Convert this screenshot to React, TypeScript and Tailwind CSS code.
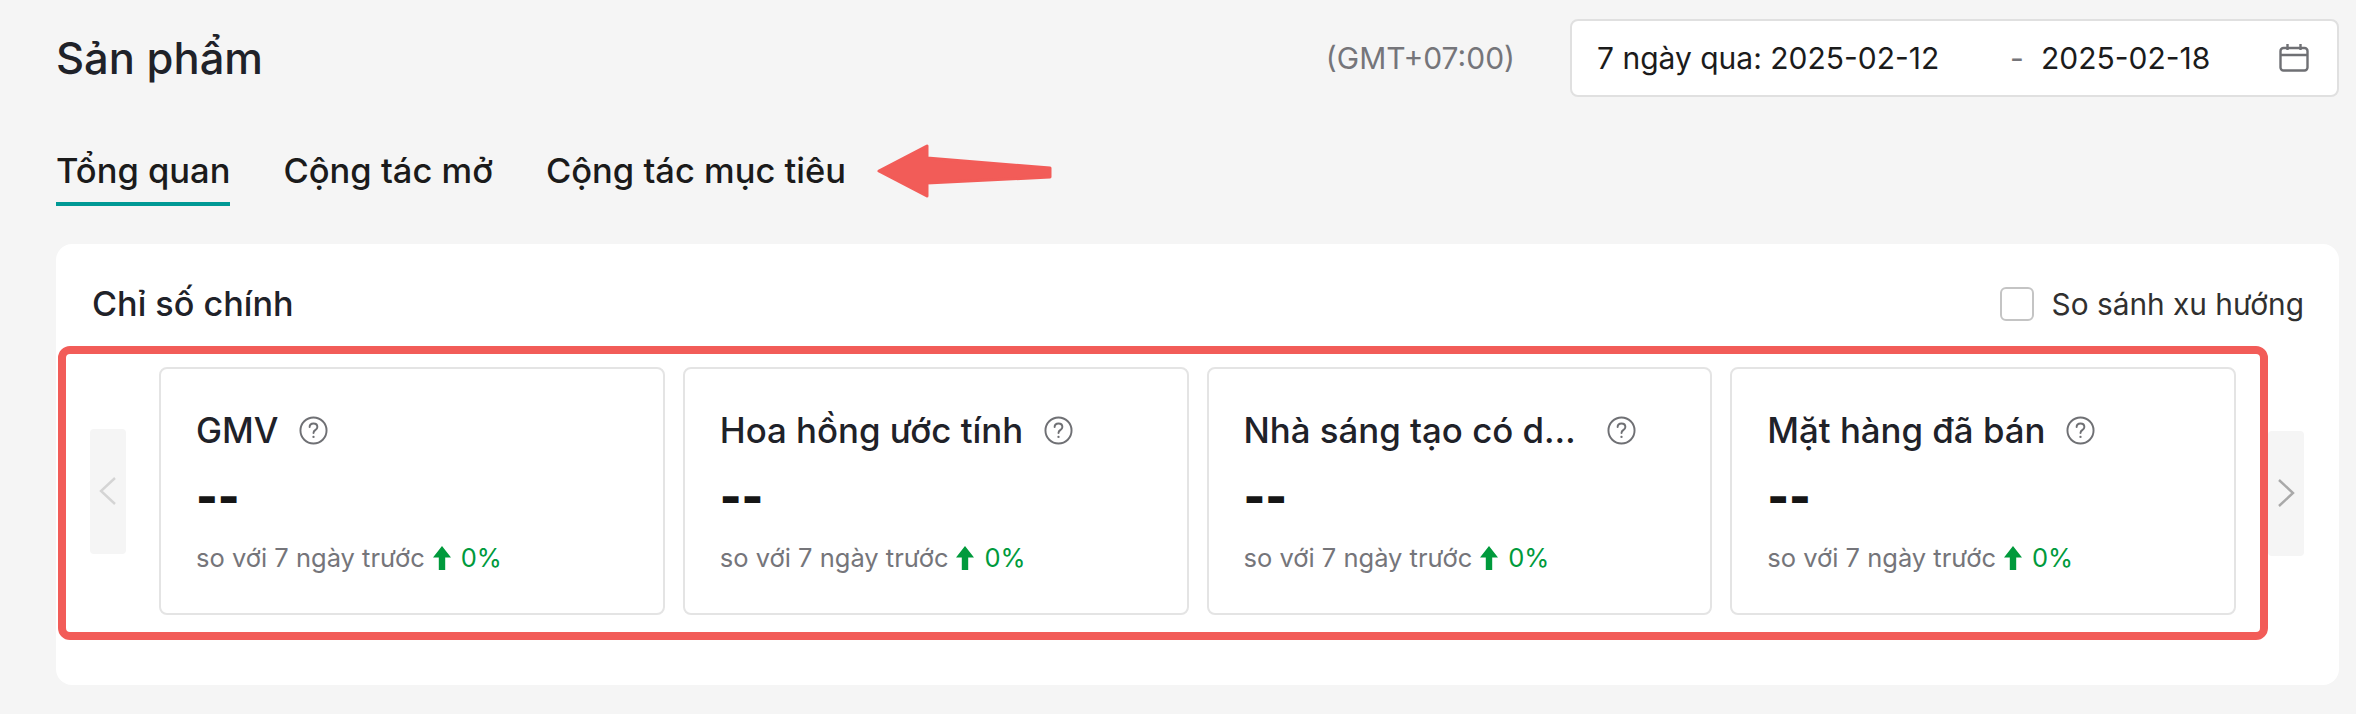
const font = 'font-["Inter","Noto_Sans",sans-serif]';

const metrics = ['GMV', 'Hoa hồng ước tính', 'Nhà sáng tạo có doanh số', 'Mặt hàng đã bán'];

function HelpIcon() {
  return (
    <svg viewBox="0 0 30 30" className="w-[29px] h-[29px] shrink-0" fill="none" stroke="#6f7074" strokeWidth="2">
      <circle cx="15" cy="15" r="13.5" />
      <path d="M11 11.5c0-2.4 1.8-3.8 4-3.8s4 1.4 4 3.6c0 1.6-.9 2.4-2.2 3.3-1.2.8-1.8 1.4-1.8 2.9" strokeLinecap="round" />
      <circle cx="15" cy="21.6" r="1.2" fill="#6f7074" stroke="none" />
    </svg>
  );
}

function UpArrow() {
  return (
    <svg viewBox="0 0 18 24" className="w-[18px] h-[24px] shrink-0" fill="#009a3c">
      <path d="M9 0 18 11.5H12.2V24H5.8V11.5H0Z" />
    </svg>
  );
}

function MetricCard({ title }: { title: string }) {
  return (
    <div className="h-[248px] border-2 border-[#e4e4e4] rounded-[8px] bg-white pl-[35px] pr-[20px] pt-[39px]">
      <div className="flex items-center gap-[21px] h-[44px]">
        <div className="max-w-[342px] truncate text-[34.8px] leading-[44px] font-medium text-[#1f2229]">{title}</div>
        <HelpIcon />
      </div>
      <div className="mt-[12px] h-[64px] text-[46px] leading-[64px] font-black text-[#151515]">--</div>
      <div className="mt-[12px] flex items-center h-[36px] text-[25.5px] leading-[36px] text-[#75757a]">
        <span>so với 7 ngày trước</span>
        <span className="ml-[8px]"><UpArrow /></span>
        <span className="ml-[10px] text-[#009a3c]">0%</span>
      </div>
    </div>
  );
}

function Chevron({ right }: { right?: boolean }) {
  return (
    <div className="w-[36px] h-[125px] rounded-[4px] bg-[#f5f5f5] flex items-center justify-center">
      <svg viewBox="0 0 18 30" className="w-[18px] h-[30px]" fill="none" stroke={right ? '#a9a9a9' : '#d4d4d4'} strokeWidth="2.4">
        <path d={right ? 'M2 2 16 15 2 28' : 'M16 2 2 15 16 28'} />
      </svg>
    </div>
  );
}

export default function App() {
  return (
    <div className={`${font} w-[2356px] h-[714px] bg-[#f5f5f5] pl-[56px] pr-[17px] pt-[19px] overflow-hidden`}>
      <div className="flex items-center h-[78px]">
        <h1 className="text-[43.5px] leading-[78px] font-medium text-[#1f2229]">Sản phẩm</h1>
        <div className="ml-auto text-[30px] text-[#75757a]">(GMT+07:00)</div>
        <div className="ml-[55px] w-[769px] h-[78px] bg-white border-2 border-[#e0e0e0] rounded-[8px] flex items-center pl-[25px] pr-[28px] text-[30px] text-[#1b1b1b]">
          <span className="w-[413px]">7 ngày qua: 2025-02-12</span>
          <span className="w-[31px] text-[#75757a]">-</span>
          <span>2025-02-18</span>
          <svg viewBox="0 0 30 28" className="ml-auto w-[30px] h-[28px]" fill="none" stroke="#6f7074" strokeWidth="2.4">
            <rect x="1.5" y="4" width="27" height="22.5" rx="3" />
            <path d="M1.5 11h27M8.5 0v6M21.5 0v6" />
          </svg>
        </div>
      </div>

      <div className="mt-[38px] flex items-center gap-[53px] h-[71px] relative">
        <div className="h-[71px] flex flex-col items-center justify-center relative">
          <span className="text-[34.5px] leading-[52px] font-medium text-[#1b1b1b]">Tổng quan</span>
          <div className="absolute left-0 right-0 bottom-[0px] h-[4px] bg-[#009995]" />
        </div>
        <span className="text-[34.5px] leading-[52px] font-medium text-[#1b1b1b]">Cộng tác mở</span>
        <span className="text-[34.5px] leading-[52px] font-medium text-[#1b1b1b]">Cộng tác mục tiêu</span>
        <svg viewBox="0 0 175 54" className="w-[175px] h-[54px] -ml-[22px]" fill="#f25c58" stroke="#f25c58" strokeWidth="3" strokeLinejoin="round">
          <path d="M2 27 50 2V14L173 24V33L50 39V52Z" />
        </svg>
      </div>

      <div className="mt-[38px] h-[441px] w-[2283px] bg-white rounded-[16px] pt-[35px]">
        <div className="h-[50px] flex items-center pl-[36px] pr-[35px]">
          <div className="text-[34.2px] font-medium text-[#1f2229]">Chỉ số chính</div>
          <div className="ml-auto flex items-center gap-[18px]">
            <div className="w-[34px] h-[34px] border-2 border-[#c4c4c4] rounded-[6px]" />
            <span className="text-[29.8px] text-[#303030]">So sánh xu hướng</span>
          </div>
        </div>
        <div className="mt-[17px] ml-[2px] flex items-center">
          <div className="w-[2210px] h-[294px] border-[8px] border-[#f25c58] rounded-[12px] flex items-center pl-[24px] pr-[24px] pb-[4px] gap-[33px]">
            <Chevron />
            <div className="flex-1 grid grid-cols-4 gap-[18px]">
              {metrics.map((m) => <MetricCard key={m} title={m} />)}
            </div>
          </div>
          <Chevron right />
        </div>
      </div>
    </div>
  );
}
